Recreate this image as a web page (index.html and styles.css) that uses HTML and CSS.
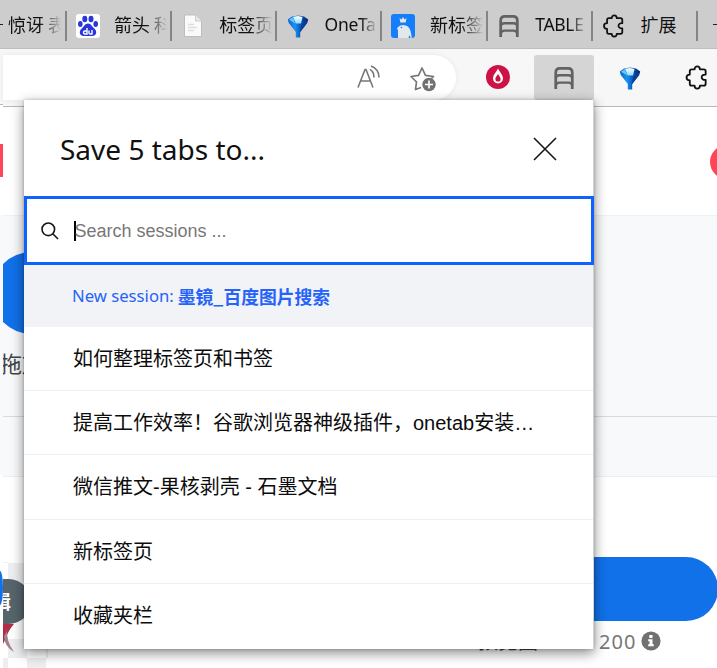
FILE: index.html
```html
<!DOCTYPE html>
<html lang="zh-CN">
<head>
<meta charset="utf-8">
<title>Save tabs</title>
<link rel="stylesheet" href="styles.css">
</head>
<body>
<svg width="0" height="0" class="defs">
  <defs>
    <linearGradient id="funnel" x1="0" x2="1"><stop offset="0" stop-color="#0b62c8"/><stop offset=".35" stop-color="#1a94ee"/><stop offset=".6" stop-color="#0b5cc4"/><stop offset="1" stop-color="#031f60"/></linearGradient>
    <linearGradient id="shine" x1="0" x2="0" y1="0" y2="1"><stop offset="0" stop-color="#fff"/><stop offset="1" stop-color="#8fdcff"/></linearGradient>
    <symbol id="i-funnel" viewBox="0 0 22 24"><path fill="url(#funnel)" d="M.8 5.500 5 2.500 11 1.500l6 1 4.200 3-1 3.500-7 9V23.500H8.800V18l-7-9Z"/><path fill="url(#shine)" d="M6 3 11 2l4.500 1-1.500 6.500H9Z"/><path fill="#6cc8fb" d="m2 5.800 3.500-2.300L8.500 9.500Z"/><path fill="#0a3f98" d="m20 6-5.500 4.500-2 9 .7-1.500 6.500-8.500Z"/></symbol>
    <symbol id="i-chair" viewBox="0 0 24 26"><g fill="none" stroke="#626262" stroke-width="3"><path d="M3 25V7Q3 2.500 7.500 2.500h9q4.500 0 4.500 4.500v18"/><path stroke-width="2.600" d="M3 12.500q1-2.500 4-2.500h10q3 0 4 2.500M3 21q1-3 4-3h10q3 0 4 3"/></g></symbol>
    <symbol id="i-puzzle" viewBox="0 0 24 26"><path fill="none" stroke="#111" stroke-width="1.900" stroke-linejoin="round" d="M6.500 4.500H9.500C9.500.5 15 .5 15 4.500h4q2 0 2 2V10c-5.500-.5-5.500 6 0 5.500v4q0 2-2 2h-4c0 4-5.500 4-5.500 0h-3q-2 0-2-2V16c-4.500 0-4.500-6 0-6V6.500q0-2 2-2Z"/></symbol>
  </defs>
</svg>
<div class="window">
  <div class="tabs">
    <div class="tab first"><i class="dash"></i><span class="label">惊讶 表</span></div>
    <div class="tab">
      <svg class="icon" viewBox="0 0 24 24"><rect width="24" height="24" rx="3" fill="#fff"/><g fill="#2a36dc"><ellipse cx="8.800" cy="5" rx="2.500" ry="3.300"/><ellipse cx="15" cy="5" rx="2.500" ry="3.300"/><ellipse cx="4.300" cy="10" rx="2.300" ry="3"/><ellipse cx="19.700" cy="10" rx="2.300" ry="3"/><path d="M12 9.500c3 0 4 3 6 4.700 4 3.300 2 7.800-1.500 7.800H7.500C4 22 2 17.500 6 14.200 8 12.500 9 9.500 12 9.500Z"/></g><path fill="none" stroke="#fff" stroke-width="1.400" d="M11 14v6H9q-1.500 0-1.500-1.500T9 17h2m2-.500v2.500q0 1 1.200 1H16v-4"/></svg>
      <span class="label">箭头 科</span></div>
    <div class="tab">
      <svg class="icon" viewBox="0 0 24 24"><path fill="#fafafa" stroke="#bdbdbd" d="M3.500 1h11l6 6v15.500h-17Z"/><path fill="#e8e8e8" stroke="#ccc" d="M14.500 1v6h6"/><path stroke="#ddd" stroke-width="1.500" d="M7 10.500h6M7 13.500h9M7 16.500h6"/></svg>
      <span class="label">标签页</span></div>
    <div class="tab"><svg class="icon"><use href="#i-funnel"/></svg><span class="label en">OneTab</span></div>
    <div class="tab">
      <svg class="icon" viewBox="0 0 24 24"><rect width="24" height="24" rx="3" fill="#147efb"/><path fill="#e2e8ec" d="M7 24V16.500l-1-2.500q2.500-3 6-3 6 0 7.500 6 1 3 1.200 7h-1.200l-1-3-1 3Z"/><path fill="#e2e8ec" d="m8.500 4 2 1.500L12 3l1.500 2.500 2-1.500-.8 4.500H9.300Z"/><circle cx="10.500" cy="13.500" r=".8" fill="#147efb"/></svg>
      <span class="label">新标签</span></div>
    <div class="tab"><svg class="icon"><use href="#i-chair"/></svg><span class="label en">TABLE</span></div>
    <div class="tab"><svg class="icon"><use href="#i-puzzle"/></svg><span class="label full">扩展</span></div>
    <div class="tab last"><i class="dash"></i></div>
  </div>
  <div class="below">
    <div class="edge"><i class="edge-bar"></i><i class="edge-red"></i><i class="edge-body"></i><i class="edge-blue"></i></div>
    <div class="main">
      <div class="toolbar">
        <div class="address">
          <svg width="26" height="26" viewBox="0 0 26 26" fill="none" stroke="#777" stroke-width="1.600"><path d="M2 22.500 9 4.500h1l7 18M4.500 16h10M14 4.500q4 2 4 8M15 1q8 3 8 11.500"/></svg>
          <svg class="star" width="28" height="28" viewBox="0 0 28 28"><path fill="none" stroke="#777" stroke-width="1.700" stroke-linejoin="round" d="M12 22.500 6.500 24.500 7.500 17 2 11.500l7.500-1.200L13 3l3.500 7.300L24.500 11.500l-2 2"/><circle cx="20" cy="19.500" r="6.700" fill="#717171"/><path stroke="#fff" stroke-width="1.700" d="M20 15.500v8M16 19.500h8"/></svg>
        </div>
        <div class="tools">
          <svg class="drop" viewBox="0 0 24 24"><circle cx="12" cy="12" r="12" fill="#cd1245"/><path fill="#fff" d="M12 3.500c2 4 5 6.500 5 10a5 5 0 0 1-10 0c0-3.500 3-6 5-10Z"/><path fill="#cd1245" d="M12 9c1 2 2.600 3 2.600 5a2.600 2.600 0 0 1-5.200 0c0-2 1.600-3 2.600-5Z"/></svg>
          <div class="active"><svg class="tool-chair"><use href="#i-chair"/></svg></div>
          <svg class="tool-funnel"><use href="#i-funnel"/></svg>
          <svg class="tool-puz"><use href="#i-puzzle"/></svg>
        </div>
      </div>
      <header class="site"><i class="red-dot"></i></header>
      <section class="hero"><i class="pill"></i><span class="drag">拖放</span></section>
      <section class="strip"></section>
      <section class="result">
        <div class="preview"><div class="badge">辑</div>
          <svg class="hair" width="14" height="32" viewBox="0 0 14 32"><path fill="#b12c49" d="M0 0h11Q5 7 3 14l-3 6Z"/><path fill="#a3818b" d="M1 12q3-4 3-7-1 12 7 23-10-6-10-16Z"/></svg></div>
        <div class="download"><i class="download-pill"></i>
          <div class="meta"><span class="under">预览图</span><span class="count">200</span>
            <svg width="20" height="20" viewBox="0 0 20 20"><circle cx="10" cy="10" r="9.600" fill="#717171"/><path fill="#fff" d="M8.300 4h3.200v3H8.300ZM7.200 8.300h4.300v5h1.300v2H7.200v-2h1.300v-3H7.200Z"/></svg></div>
        </div>
      </section>
    </div>
  </div>
  <div class="popup">
    <div class="popup-head"><h1>Save 5 tabs to...</h1>
      <svg width="24" height="24" viewBox="0 0 24 24" stroke="#161616" stroke-width="1.600"><path d="m1 1 22 22M23 1 1 23"/></svg></div>
    <div class="search">
      <svg width="18" height="18" viewBox="0 0 18 18" fill="none" stroke="#161616" stroke-width="1.600"><circle cx="7.300" cy="7.300" r="6.300"/><path d="m11.800 11.800 5.200 5.200"/></svg>
      <i class="caret"></i><span>Search sessions ...</span></div>
    <div class="new"><span class="new-label">New session:</span><b>墨镜_百度图片搜索</b></div>
    <div class="row">如何整理标签页和书签</div>
    <div class="row">提高工作效率！谷歌浏览器神级插件，onetab安装…</div>
    <div class="row">微信推文-果核剥壳 - 石墨文档</div>
    <div class="row">新标签页</div>
    <div class="row">收藏夹栏</div>
  </div>
</div>
</body>
</html>
```
FILE: styles.css
```css
* { box-sizing: border-box; }
body { margin: 0; overflow: hidden; font-family: "Noto Sans", "Noto Sans CJK SC", sans-serif; }
i { display: block; }
svg { flex: none; display: block; }
.defs { position: absolute; }
.window { position: relative; width: 717px; height: 668px; overflow: hidden; background: #fff; display: flex; flex-direction: column; }

.tabs { height: 49px; flex: none; background: #cdcdcd; border-bottom: 1px solid #bebebe; display: flex; padding-top: 11px; }
.tab { width: 105.300px; height: 30px; flex: none; display: flex; align-items: center; padding-left: 9px; border-right: 2px solid #858585; }
.tab.first { width: 66.500px; padding-left: 0; }
.tab.last { border: 0; padding-left: 15px; }
.dash { width: 3px; height: 1.500px; flex: none; margin: -3px 5px 0 0; background: #222; }
.last .dash { width: 18px; }
.icon { width: 24px; height: 24px; margin-right: 14.500px; }
.label { width: 57px; height: 30px; flex: none; font: 18px/27px "Noto Sans CJK SC", sans-serif; color: #111; white-space: nowrap; overflow: hidden; mask-image: linear-gradient(90deg, #000 55%, transparent 94%); }
.en { font-family: "Noto Sans", sans-serif; font-size: 17.500px; letter-spacing: -.3px; mask-image: linear-gradient(90deg, #000 62%, transparent 92%); }
.full { mask-image: none; }

.below { flex: 1; display: flex; min-height: 0; }
.edge { width: 3px; flex: none; background: #fff; }
.edge-bar { height: 56px; background: #f7f7f7; border-bottom: 1px solid #b8b8b8; }
.edge-red { height: 33px; margin-top: 39px; background: #ff4659; }
.edge-body { height: 260px; margin-top: 38px; background: #f7f9fb; }
.edge-blue { height: 34px; margin-top: 96px; background: #1171e8; border-radius: 0 3px 3px 0 / 0 17px 17px 0; }
.main { width: 714px; flex: none; }
.toolbar { height: 58px; display: flex; background: #f7f7f7; border-bottom: 1px solid #b8b8b8; }
.address { width: 453px; height: 45px; margin-top: 6px; background: #fff; border-radius: 0 23px 23px 0; box-shadow: 0 0 6px #0001; display: flex; justify-content: flex-end; align-items: center; padding-right: 19px; gap: 27px; }
.star { margin-top: 2px; }
.tools { display: flex; margin-top: 6px; height: 45px; align-items: center; }
.drop { width: 24px; height: 24px; margin-left: 30px; margin-bottom: 1px; }
.active { width: 60px; height: 45px; margin-left: 24px; background: #d5d5d5; border-radius: 3px; display: flex; justify-content: center; align-items: center; }
.tool-chair { width: 22px; height: 24px; }
.tool-funnel { width: 22px; height: 24px; margin-left: 25px; }
.tool-puz { width: 24px; height: 25px; margin-left: 44px; }
.site { height: 109px; display: flex; justify-content: flex-end; padding-top: 38px; overflow: hidden; border-bottom: 1px solid #f1f1f1; }
.red-dot { width: 34px; height: 34px; flex: none; margin-right: -27px; background: #ff4659; border-radius: 50%; }
.hero { height: 201px; padding-top: 36px; background: #f7f9fb; border-bottom: 1px solid #d9dadc; overflow: hidden; }
.pill { width: 260px; height: 82px; margin-left: -12px; background: #1171e8; border-radius: 41px; }
.drag { display: block; width: 60px; margin: 12px 0 0 -3px; font: 22px/33px "Noto Sans CJK SC", sans-serif; color: #444; white-space: nowrap; }
.strip { height: 60px; background: #f7f9fb; border-bottom: 1px solid #eceeef; }
.result { height: 191px; display: flex; justify-content: space-between; }
.preview { width: 45px; height: 106px; margin-top: 85px; overflow: hidden; background: repeating-conic-gradient(#eceeef 0 25%, #fff 0 50%) -14px 1px / 38px 38px; }
.badge { width: 60px; height: 45px; margin: 17px 0 0 -32px; background: #56646c; border-radius: 24px; color: #fff; font: bold 19px/44px "Noto Sans CJK SC", sans-serif; padding-left: 21px; }
.hair { width: 14px; height: 32px; }
.download { width: 340px; padding-top: 80px; }
.download-pill { height: 64px; margin-right: -1px; background: #1171e8; border-radius: 32px; }
.meta { display: flex; align-items: center; height: 40px; padding-left: 101px; color: #777; }
.under { width: 65px; margin-right: 56px; color: #444; font: 20px/28px "Noto Sans CJK SC", sans-serif; }
.count { font-size: 20px; letter-spacing: 1px; margin-right: 5px; }

.popup { position: absolute; left: 24px; top: 100px; width: 570px; height: 549px; background: #fff; border-right: 1px solid #d2d2d2; box-shadow: 0 4px 12px #0007, 0 0 3px #0003; }
.popup-head { height: 96px; padding: 1px 36px 0 36px; display: flex; align-items: center; justify-content: space-between; }
h1 { margin: 1px 0 0; font: 400 28px/40px "Noto Sans", sans-serif; letter-spacing: 0; white-space: nowrap; color: #111; }
.search { height: 69px; width: 570px; border: 3px solid #1062fe; display: flex; align-items: center; padding: 0 0 0 14px; font: 18px/24px "Liberation Sans", sans-serif; color: #777; }
.caret { width: 1.500px; height: 20px; margin: 1px -1px 0 15px; background: #000; }
.new { height: 61.500px; display: flex; align-items: center; gap: 4px; padding: 0 0 0 48px; background: #f2f3f7; color: #2563f9; font: 16.700px/26px "Noto Sans", sans-serif; white-space: nowrap; }
.new b { font: bold 17.800px/26px "Noto Sans CJK SC", sans-serif; }
.row { height: 64.400px; padding-left: 49px; border-bottom: 1px solid #efefef; font: 20px/65px "Liberation Sans", "Noto Sans CJK SC", sans-serif; color: #0c0c0c; white-space: nowrap; }
.row:last-child { border: 0; }
```
